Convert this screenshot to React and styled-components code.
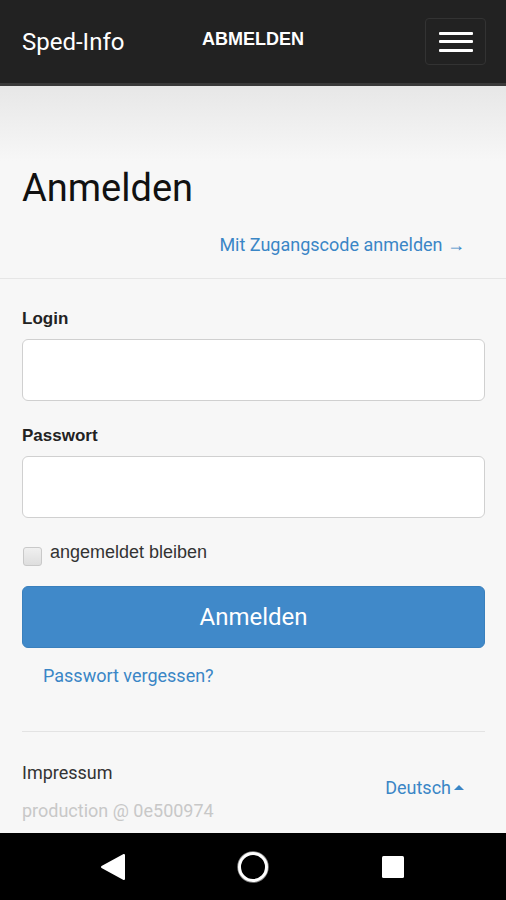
import React from "react";
import styled, { createGlobalStyle } from "styled-components";

const Global = createGlobalStyle`
  html, body { margin: 0; padding: 0; background: #f7f7f7; }
  body { font-family: Roboto, "Liberation Sans", Arial, sans-serif; }
  * { box-sizing: border-box; }
`;

const Page = styled.div`
  width: 506px;
  height: 900px;
  display: flex;
  flex-direction: column;
  background: #f7f7f7;
  overflow: hidden;
`;

const Header = styled.header`
  height: 86px;
  flex: none;
  background: #222222;
  border-bottom: 3px solid #3a3a3a;
  display: flex;
  align-items: center;
  padding: 0 20px 0 22px;
`;

const Brand = styled.div`
  color: #ffffff;
  font-size: 24px;
  width: 180px;
`;

const NavLink = styled.div`
  color: #ffffff;
  font-family: "Liberation Sans", Arial, sans-serif;
  font-weight: 700;
  font-size: 18px;
  flex: 1;
  margin-top: -4px;
`;

const Burger = styled.div`
  width: 61px;
  height: 47px;
  border: 1px solid #333;
  border-radius: 4px;
  display: flex;
  flex-direction: column;
  align-items: center;
  justify-content: center;
  gap: 5.5px;
`;

const Bar = styled.span`
  display: block;
  width: 34px;
  height: 3px;
  border-radius: 1px;
  background: #ffffff;
`;

const Jumbo = styled.section`
  background: linear-gradient(#e7e7e7 0px, #f7f7f7 75px);
  padding: 82px 22px 0 22px;
  border-bottom: 1px solid #e6e6e6;
  height: 193px;
  flex: none;
`;

const Title = styled.h1`
  margin: 0;
  font-weight: 400;
  font-size: 38px;
  color: #111;
  line-height: 40px;
`;

const CodeLink = styled.a`
  display: block;
  text-align: right;
  color: #3a86c6;
  font-size: 18px;
  margin-top: 26px;
  padding-right: 19px;
  text-decoration: none;
  line-height: 22px;
`;

const Form = styled.form`
  padding: 30px 21px 0 22px;
  display: flex;
  flex-direction: column;
`;

const Label = styled.label`
  font-family: "Liberation Sans", Arial, sans-serif;
  font-weight: 700;
  font-size: 17px;
  color: #222;
  line-height: 20px;
  margin-bottom: 10px;
`;

const Input = styled.input`
  width: 100%;
  height: 62px;
  border: 1px solid #d0d0d0;
  border-radius: 6px;
  background: #fff;
  margin-bottom: ${(p) => p.$mb || 0}px;
  outline: none;
`;

const CheckRow = styled.div`
  display: flex;
  align-items: flex-start;
  gap: 8px;
  margin-top: 24px;
  height: 26px;
`;

const Box = styled.span`
  width: 19px;
  height: 19px;
  margin-top: 5px;
  margin-left: 1px;
  border: 1px solid #c9c9c9;
  border-radius: 3px;
  background: linear-gradient(#f0f0f0, #dedede);
`;

const CheckText = styled.span`
  font-family: "Liberation Sans", Arial, sans-serif;
  font-size: 18px;
  color: #333;
  line-height: 20px;
`;

const Submit = styled.button`
  margin-top: 18px;
  height: 62px;
  width: 100%;
  border: 1px solid #3a80bd;
  border-radius: 6px;
  background: #4089c9;
  color: #fff;
  font-family: Roboto, sans-serif;
  font-size: 24px;
`;

const Forgot = styled.a`
  color: #3a86c6;
  font-size: 18px;
  margin: 18px 0 0 21px;
  line-height: 20px;
  text-decoration: none;
`;

const Divider = styled.hr`
  margin: 45px 0 0 0;
  border: none;
  border-top: 1px solid #e3e3e3;
`;

const Footer = styled.div`
  display: flex;
  justify-content: space-between;
  align-items: center;
  padding: 31px 42px 0 22px;
`;

const FooterLeft = styled.div`
  display: flex;
  flex-direction: column;
  gap: 18px;
`;

const Impressum = styled.span`
  font-size: 18px;
  color: #333;
  line-height: 20px;
`;

const Version = styled.span`
  font-size: 18px;
  color: #c8c8c8;
  line-height: 20px;
`;

const Lang = styled.span`
  color: #3a86c6;
  font-size: 18px;
  display: flex;
  align-items: center;
  gap: 3px;
  margin-bottom: 10px;
`;

const Spacer = styled.div`
  flex: 1;
`;

const SysNav = styled.nav`
  height: 67px;
  flex: none;
  background: #000;
  display: flex;
  justify-content: center;
  align-items: center;
  gap: 80px;
`;

const NavBtn = styled.div`
  width: 60px;
  display: flex;
  justify-content: center;
`;

export default function App() {
  return (
    <>
      <Global />
      <Page>
        <Header>
          <Brand>Sped-Info</Brand>
          <NavLink>ABMELDEN</NavLink>
          <Burger>
            <Bar />
            <Bar />
            <Bar />
          </Burger>
        </Header>
        <Jumbo>
          <Title>Anmelden</Title>
          <CodeLink>Mit Zugangscode anmelden →</CodeLink>
        </Jumbo>
        <Form onSubmit={(e) => e.preventDefault()}>
          <Label>Login</Label>
          <Input $mb={25} />
          <Label>Passwort</Label>
          <Input type="password" />
          <CheckRow>
            <Box />
            <CheckText>angemeldet bleiben</CheckText>
          </CheckRow>
          <Submit type="button">Anmelden</Submit>
          <Forgot>Passwort vergessen?</Forgot>
          <Divider />
        </Form>
        <Footer>
          <FooterLeft>
            <Impressum>Impressum</Impressum>
            <Version>production @ 0e500974</Version>
          </FooterLeft>
          <Lang>
            Deutsch
            <svg width="10" height="6" viewBox="0 0 10 6">
              <path d="M0 6 L5 1 L10 6 Z" fill="#3a86c6" />
            </svg>
          </Lang>
        </Footer>
        <Spacer />
        <SysNav>
          <NavBtn>
            <svg width="26" height="28" viewBox="0 0 26 28">
              <path d="M2 14 L24 2 L24 26 Z" fill="#fff" stroke="#fff" strokeWidth="2" strokeLinejoin="round" />
            </svg>
          </NavBtn>
          <NavBtn>
            <svg width="34" height="34" viewBox="0 0 34 34">
              <circle cx="17" cy="17" r="15" fill="none" stroke="#888" strokeWidth="1.5" />
              <circle cx="17" cy="17" r="13.5" fill="none" stroke="#fff" strokeWidth="3" />
            </svg>
          </NavBtn>
          <NavBtn>
            <svg width="24" height="24" viewBox="0 0 24 24">
              <rect x="1" y="1" width="22" height="22" rx="1.5" fill="#fff" />
            </svg>
          </NavBtn>
        </SysNav>
      </Page>
    </>
  );
}
